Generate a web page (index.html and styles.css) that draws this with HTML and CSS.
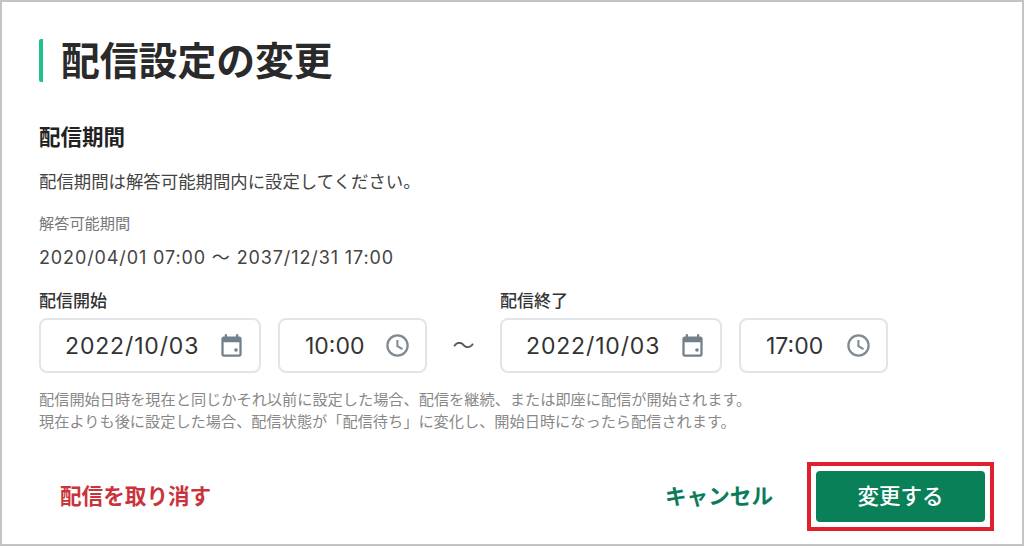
FILE: index.html
```html
<!DOCTYPE html>
<html lang="ja">
<head>
    <meta charset="UTF-8">
    <title>配信設定の変更</title>
    <link rel="stylesheet" href="styles.css">
</head>
<body>
    <div class="panel">
        <h1 class="title">配信設定の変更</h1>
        <h2 class="section-title">配信期間</h2>
        <p class="lead">配信期間は解答可能期間内に設定してください。</p>
        <p class="caption">解答可能期間</p>
        <p class="period">2020/04/01 07:00 〜 2037/12/31 17:00</p>

        <div class="range">
            <div class="field">
                <label class="field-label">配信開始</label>
                <div class="inputs">
                    <div class="input input-date">
                        <span>2022/10/03</span>
                        <svg class="icon" viewBox="0 0 24 24"><path d="M19 4h-1V2h-2v2H8V2H6v2H5C3.9 4 3 4.9 3 6v14c0 1.1.9 2 2 2h14c1.100 0 2-.9 2-2V6c0-1.100-.9-2-2-2zm0 16H5V9h14v11z"/><circle cx="16" cy="16" r="1.600"/></svg>
                    </div>
                    <div class="input input-time">
                        <span>10:00</span>
                        <svg class="icon" viewBox="0 0 24 24"><path d="M12 2a10 10 0 1 0 0 20 10 10 0 0 0 0-20zm0 18a8 8 0 1 1 0-16 8 8 0 0 1 0 16zm.800-13h-1.800v6l5 3 .900-1.500-4.100-2.400V7z"/></svg>
                    </div>
                </div>
            </div>
            <span class="tilde">〜</span>
            <div class="field">
                <label class="field-label">配信終了</label>
                <div class="inputs">
                    <div class="input input-date">
                        <span>2022/10/03</span>
                        <svg class="icon" viewBox="0 0 24 24"><path d="M19 4h-1V2h-2v2H8V2H6v2H5C3.9 4 3 4.9 3 6v14c0 1.1.9 2 2 2h14c1.100 0 2-.9 2-2V6c0-1.100-.9-2-2-2zm0 16H5V9h14v11z"/><circle cx="16" cy="16" r="1.600"/></svg>
                    </div>
                    <div class="input input-time">
                        <span>17:00</span>
                        <svg class="icon" viewBox="0 0 24 24"><path d="M12 2a10 10 0 1 0 0 20 10 10 0 0 0 0-20zm0 18a8 8 0 1 1 0-16 8 8 0 0 1 0 16zm.800-13h-1.800v6l5 3 .900-1.500-4.100-2.400V7z"/></svg>
                    </div>
                </div>
            </div>
        </div>

        <p class="note">配信開始日時を現在と同じかそれ以前に設定した場合、配信を継続、または即座に配信が開始されます。<br>現在よりも後に設定した場合、配信状態が「配信待ち」に変化し、開始日時になったら配信されます。</p>

        <div class="actions">
            <button class="btn-text btn-danger">配信を取り消す</button>
            <div class="actions-right">
                <button class="btn-text btn-cancel">キャンセル</button>
                <div class="highlight">
                    <button class="btn-primary">変更する</button>
                </div>
            </div>
        </div>
    </div>
</body>
</html>
```

FILE: styles.css
```css
* {
    box-sizing: border-box;
}
html, body {
    margin: 0;
    height: 100%;
}
body {
    font-family: Inter, "Noto Sans CJK JP", "Noto Sans", sans-serif;
    background-color: #fff;
    color: #333;
    overflow: hidden;
}
p, h1, h2 {
    margin: 0;
}
.panel {
    height: 546px;
    width: 1024px;
    border: 2px solid #c4c4c4;
    padding: 37px 0 0 37px;
}
.title {
    border-left: 4px solid #1fc08e;
    border-radius: 2px;
    padding-left: 18px;
    height: 43px;
    line-height: 43px;
    font-size: 38.800px;
    font-weight: 700;
    color: #2a2a2a;
}
.section-title {
    margin-top: 40px;
    font-size: 21.500px;
    line-height: 30px;
    font-weight: 700;
    color: #222;
}
.lead {
    margin-top: 17px;
    font-size: 17.400px;
    line-height: 26px;
    color: #444;
}
.caption {
    margin-top: 18px;
    font-size: 15.200px;
    line-height: 22px;
    color: #777;
}
.period {
    margin-top: 10px;
    font-size: 18px;
    line-height: 26px;
    letter-spacing: 0.880px;
    color: #444;
}
.range {
    display: flex;
    align-items: flex-end;
    margin-top: 18px;
}
.field-label {
    display: block;
    font-size: 17px;
    line-height: 24px;
    font-weight: 500;
    color: #333;
    margin-bottom: 5px;
}
.inputs {
    display: flex;
    gap: 17px;
}
.input {
    display: flex;
    align-items: center;
    justify-content: space-between;
    height: 55px;
    border: 2px solid #e1e5ea;
    border-radius: 8px;
    font-size: 23px;
    color: #333;
    background-color: #fff;
    padding-right: 14px;
}
.input-date {
    width: 222px;
    padding-left: 24px;
    letter-spacing: 0.850px;
}
.input-time {
    width: 149px;
    padding-left: 25px;
}
.icon {
    width: 27px;
    height: 27px;
    fill: #72808c;
    flex: none;
}
.input-time .icon {
    fill: #7f8b92;
}
.tilde {
    width: 73px;
    text-align: center;
    font-size: 22px;
    line-height: 55px;
    color: #555;
}
.note {
    margin-top: 16px;
    font-size: 15.200px;
    line-height: 22px;
    color: #888;
}
.actions {
    display: flex;
    align-items: center;
    justify-content: space-between;
    margin-top: 29px;
    padding-left: 21px;
    width: 955px;
}
.actions-right {
    display: flex;
    align-items: center;
    gap: 34px;
}
button {
    font-family: inherit;
    border: none;
    background: none;
    padding: 0;
    cursor: pointer;
}
.btn-text {
    font-size: 21.600px;
    font-weight: 700;
    padding-bottom: 4px;
}
.btn-danger {
    color: #c8343a;
}
.btn-cancel {
    color: #0b7c5a;
}
.highlight {
    border: 4px solid #e1202e;
    padding: 5px;
}
.btn-primary {
    display: block;
    width: 169px;
    height: 51px;
    padding-bottom: 4px;
    background-color: #0a8058;
    border-radius: 4px;
    color: #fff;
    font-size: 21.500px;
    font-weight: 500;
}
```
